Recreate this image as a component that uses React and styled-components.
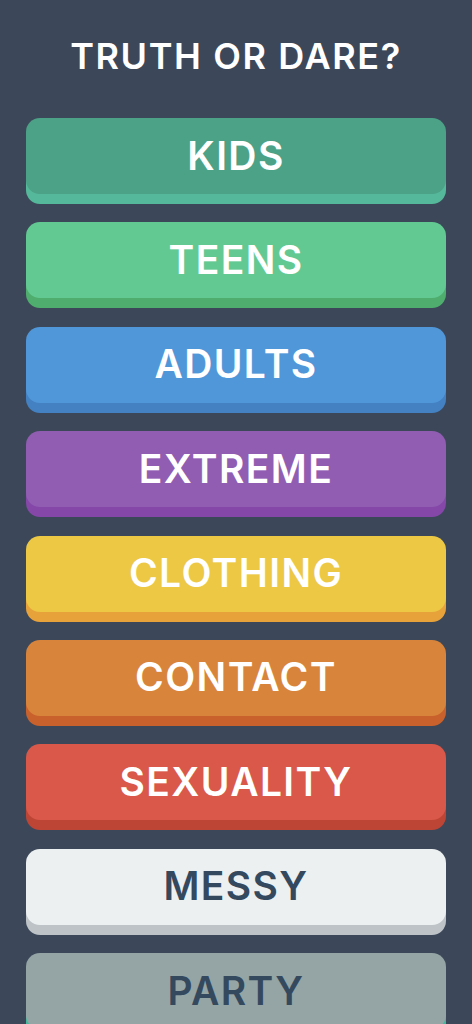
import React from 'react';
import styled, { createGlobalStyle } from 'styled-components';

const GlobalStyle = createGlobalStyle`
  html, body {
    margin: 0;
    padding: 0;
    background-color: #3c4859;
  }
  body {
    font-family: Inter, "Open Sans", sans-serif;
  }
`

const Screen = styled.main`
  min-height: 100vh;
  background-color: #3c4859;
  display: flex;
  flex-direction: column;
  align-items: stretch;
  padding: 0 26px;
  box-sizing: border-box;
`

const Title = styled.h1`
  margin: 0;
  height: 118px;
  display: flex;
  align-items: center;
  justify-content: center;
  padding-bottom: 6px;
  box-sizing: border-box;
  color: #ffffff;
  font-size: 36px;
  font-weight: 600;
  letter-spacing: 1.6px;
`

const List = styled.div`
  display: flex;
  flex-direction: column;
  gap: 18.4px;
`

// each mode is a raised tile: flat face plus a darker lip underneath
const Mode = styled.button`
  height: 76px;
  width: 100%;
  border: none;
  border-radius: 14px;
  background-color: ${p => p.face};
  box-shadow: 0 10px 0 ${p => p.lip};
  margin-bottom: 10px;
  color: ${p => p.ink || '#ffffff'};
  font-family: inherit;
  font-size: 39px;
  font-weight: 600;
  letter-spacing: 1.4px;
  display: flex;
  align-items: center;
  justify-content: center;
  padding: 0 0 2px;
  cursor: pointer;
`

const modes = [
  { name: 'KIDS', face: '#4ca287', lip: '#55b89a' },
  { name: 'TEENS', face: '#63c993', lip: '#4fae6e' },
  { name: 'ADULTS', face: '#5097d9', lip: '#4381c2' },
  { name: 'EXTREME', face: '#905db2', lip: '#8547a8' },
  { name: 'CLOTHING', face: '#ecc845', lip: '#e8a23a' },
  { name: 'CONTACT', face: '#d9843b', lip: '#c8612c' },
  { name: 'SEXUALITY', face: '#d95849', lip: '#bd4536' },
  { name: 'MESSY', face: '#ecf0f1', lip: '#bdc3c7', ink: '#34495e' },
  { name: 'PARTY', face: '#95a5a6', lip: '#46b89c', ink: '#34495e' },
]

export default function App () {
  return (
    <Screen>
      <GlobalStyle />
      <Title>TRUTH OR DARE?</Title>
      <List>
        {modes.map(m => (
          <Mode key={m.name} face={m.face} lip={m.lip} ink={m.ink}>
            {m.name}
          </Mode>
        ))}
      </List>
    </Screen>
  );
}
